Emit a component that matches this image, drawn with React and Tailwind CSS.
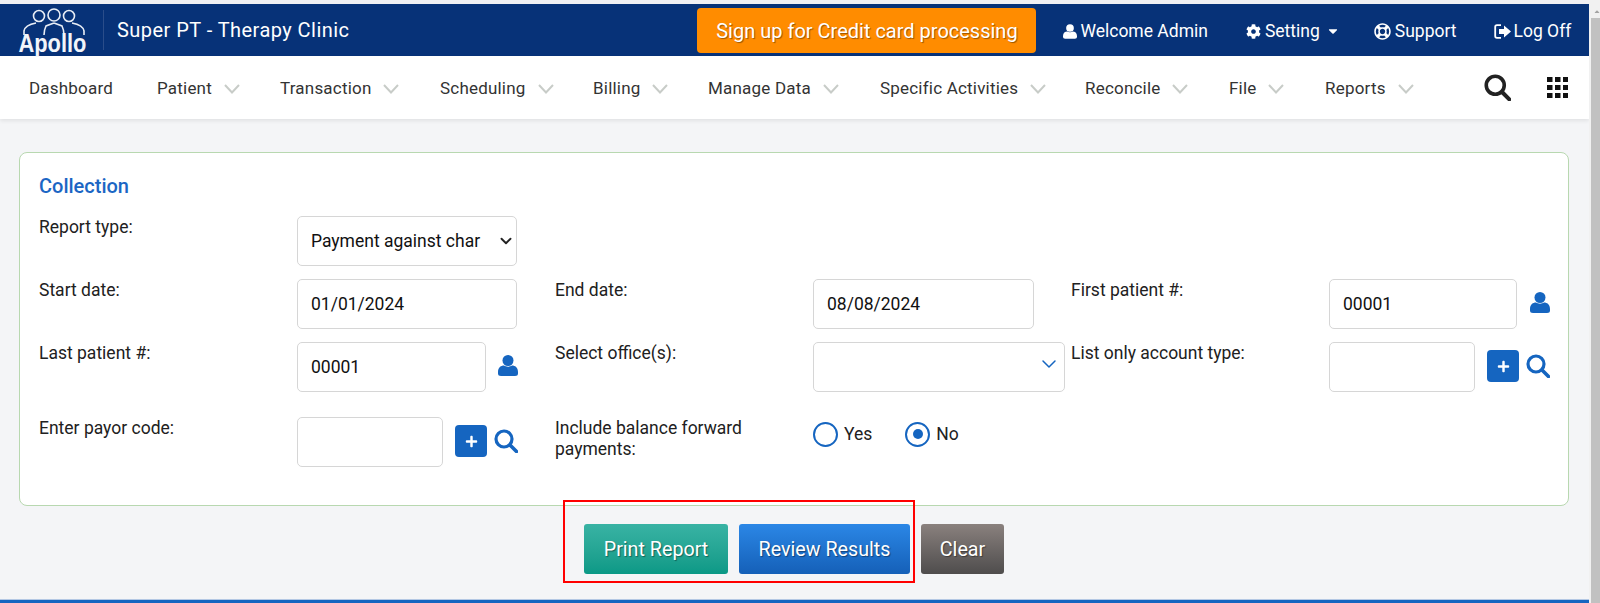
import React from 'react';
import { FaCog, FaRegLifeRing, FaCaretDown, FaPlus } from 'react-icons/fa';
import { ChevronDown } from 'lucide-react';

const menu = [
  { name: 'Dashboard', w: 'w-[128px]' },
  { name: 'Patient', w: 'w-[123px]', arrow: true },
  { name: 'Transaction', w: 'w-[160px]', arrow: true },
  { name: 'Scheduling', w: 'w-[153px]', arrow: true },
  { name: 'Billing', w: 'w-[115px]', arrow: true },
  { name: 'Manage Data', w: 'w-[172px]', arrow: true },
  { name: 'Specific Activities', w: 'w-[205px]', arrow: true },
  { name: 'Reconcile', w: 'w-[144px]', arrow: true },
  { name: 'File', w: 'w-[96px]', arrow: true },
  { name: 'Reports', w: 'w-[110px]', arrow: true },
];

const inputCls = 'h-[50px] rounded-[5px] border border-[#d6d6d6] bg-white pl-[13px] text-[17.5px] text-[#111] outline-none';
const btnCls = 'h-[50px] rounded-[3px] bg-gradient-to-b pt-[2px] text-[19.7px] text-white [text-shadow:1px_1px_1px_rgba(0,0,0,0.4)]';
const headerItem = 'flex items-center pt-[2px] text-[17.5px]';

const Label = ({ children, className = 'w-[258px]' }) => (
  <div className={`${className} shrink-0 pt-[1px] text-[17.5px] leading-[21px] text-[#212121]`}>{children}</div>
);

const Person = ({ className }) => (
  <svg width="20" height="21" viewBox="0 0 20 21" fill="currentColor" className={className}>
    <circle cx="10" cy="5.5" r="5.5" />
    <path d="M0 17 C0 12.5 3 10.5 6 10.5 C8 12 12 12 14 10.5 C17 10.5 20 12.5 20 17 V18.5 Q20 21 17 21 H3 Q0 21 0 18.5 Z" />
  </svg>
);

const SearchIcon = ({ size, className }) => (
  <svg width={size} height={size} viewBox="0 0 24 24" fill="none" stroke="currentColor" className={className}>
    <circle cx="10" cy="10" r="8" strokeWidth="3.2" />
    <path d="M16 16 L22.5 22.5" strokeWidth="3.6" strokeLinecap="round" />
  </svg>
);

const GridIcon = () => (
  <svg width="21" height="21" viewBox="0 0 21 21" fill="#111" className="ml-[36px]">
    {[0, 8, 16].map((y) =>
      [0, 8, 16].map((x) => <rect key={`${x}-${y}`} x={x} y={y} width="5.5" height="5" />)
    )}
  </svg>
);

const LogOffIcon = () => (
  <svg width="17" height="15" viewBox="0 0 17 15" fill="none">
    <path d="M7 1.2 H3 Q1.2 1.2 1.2 3 V12 Q1.2 13.8 3 13.8 H7" stroke="#fff" strokeWidth="1.8" />
    <path d="M5 5 H10 V1.5 L17 7.5 L10 13.5 V10 H5 Z" fill="#fff" />
  </svg>
);

const PlusSearch = () => (
  <div className="ml-[12px] mt-[8px] flex h-[32px] items-center gap-[7px]">
    <div className="flex h-[32px] w-[32px] items-center justify-center rounded-[4px] bg-[#1565c0] text-white">
      <FaPlus size={13} />
    </div>
    <SearchIcon size={24} className="text-[#1565c0]" />
  </div>
);

const Radio = ({ label, checked }) => (
  <div className="flex items-center gap-[6px]">
    <span className="flex h-[25px] w-[25px] items-center justify-center rounded-full border-[2px] border-[#1565c0] bg-white">
      {checked && <span className="h-[10px] w-[10px] rounded-full bg-[#1565c0]" />}
    </span>
    <span className="text-[17.5px] text-[#212121]">{label}</span>
  </div>
);

const Logo = () => (
  <div className="flex w-[87px] flex-col items-center">
    <svg width="70" height="30" viewBox="0 0 70 30" fill="none" stroke="#e8edf5" strokeWidth="1.6" className="-mb-[5px]">
      <circle cx="21" cy="10" r="5.5" />
      <circle cx="36" cy="9" r="6" />
      <circle cx="51" cy="10" r="5.5" />
      <path d="M6 29 V25 Q7 19 18 17 M36 17 L28 20 Q26 24 26 29 M36 17 L44 20 Q46 24 46 29 M54 17 Q65 19 66 25 V29" />
    </svg>
    <span className="font-['Liberation_Sans',sans-serif] text-[26px] font-bold leading-[24px] text-[#f2f5fa] scale-x-[0.84]">Apollo</span>
  </div>
);

export default function App() {
  return (
    <div className="flex h-[603px] w-full overflow-hidden bg-[#f4f5f7] font-['Roboto',sans-serif]">
      <div className="flex min-w-0 flex-1 flex-col">
        <div className="h-[4px] shrink-0 bg-[#f0f0f4]" />
        <header className="flex h-[52px] shrink-0 items-center bg-[#073278] pl-[9px] text-white">
          <Logo />
          <div className="ml-[7px] h-[40px] w-px bg-[#2a4d8a]" />
          <div className="ml-[13px] text-[20px] tracking-[0.45px]">Super PT - Therapy Clinic</div>
          <button className="ml-[348px] h-[45px] w-[339px] rounded-[4px] bg-[#ff8c00] pt-[1px] text-[20px] text-white [text-shadow:1px_1px_1px_rgba(0,0,0,0.4)]">
            Sign up for Credit card processing
          </button>
          <div className={`${headerItem} ml-[27px] gap-[3px]`}><Person className="h-[15px] w-[14px]" />Welcome Admin</div>
          <div className={`${headerItem} ml-[38px] gap-[4px]`}><FaCog size={15} />Setting<FaCaretDown size={14} className="ml-[2px]" /></div>
          <div className={`${headerItem} ml-[34px] gap-[4px]`}><FaRegLifeRing size={17} />Support</div>
          <div className={`${headerItem} ml-[37px] gap-[3px]`}><LogOffIcon />Log Off</div>
        </header>
        <nav className="flex h-[63px] shrink-0 items-center bg-white pl-[29px] shadow-[0_2px_4px_rgba(0,0,0,0.08)]">
          {menu.map((m) => (
            <div key={m.name} className={`flex items-center gap-[12px] pt-[2px] text-[17px] tracking-[0.2px] text-[#333] ${m.w}`}>
              {m.name}
              {m.arrow && (
                <svg width="16" height="10" viewBox="0 0 16 10" fill="none" stroke="#c8ccc8" strokeWidth="2">
                  <path d="M1 1 L8 8.5 L15 1" />
                </svg>
              )}
            </div>
          ))}
          <SearchIcon size={27} className="ml-[49px] text-[#222]" />
          <GridIcon />
        </nav>
        <main className="flex-1 pl-[19px] pr-[20px] pt-[33px]">
          <section className="h-[354px] rounded-[8px] border border-[#b8d8b0] bg-white pl-[19px] pt-[21px]">
            <h2 className="text-[20px] font-medium leading-[24px] text-[#1b66c4]">Collection</h2>
            <div className="mt-[18px] flex h-[50px]">
              <Label>Report type:</Label>
              <div className="relative">
                <div className={`${inputCls} flex w-[220px] items-center`}>Payment against char</div>
                <ChevronDown size={18} strokeWidth={2.5} className="absolute right-[2px] top-[16px] text-[#222]" />
              </div>
            </div>
            <div className="mt-[13px] flex h-[50px]">
              <div className="flex w-[516px]">
                <Label>Start date:</Label>
                <input readOnly value="01/01/2024" className={`${inputCls} w-[220px]`} />
              </div>
              <div className="flex w-[516px]">
                <Label>End date:</Label>
                <input readOnly value="08/08/2024" className={`${inputCls} w-[221px]`} />
              </div>
              <div className="flex">
                <Label>First patient #:</Label>
                <input readOnly value="00001" className={`${inputCls} w-[188px]`} />
                <Person className="ml-[13px] mt-[13px] text-[#1565c0]" />
              </div>
            </div>
            <div className="mt-[13px] flex h-[50px]">
              <div className="flex w-[516px]">
                <Label>Last patient #:</Label>
                <input readOnly value="00001" className={`${inputCls} w-[189px]`} />
                <Person className="ml-[12px] mt-[13px] text-[#1565c0]" />
              </div>
              <div className="flex w-[516px]">
                <Label>Select office(s):</Label>
                <div className="relative">
                  <div className={`${inputCls} w-[252px]`} />
                  <ChevronDown size={24} strokeWidth={1.5} className="absolute right-[4px] top-[10px] text-[#1565c0]" />
                </div>
              </div>
              <div className="flex">
                <Label>List only account type:</Label>
                <input readOnly className={`${inputCls} w-[146px]`} />
                <PlusSearch />
              </div>
            </div>
            <div className="mt-[25px] flex h-[50px]">
              <div className="flex w-[516px]">
                <Label>Enter payor code:</Label>
                <input readOnly className={`${inputCls} w-[146px]`} />
                <PlusSearch />
              </div>
              <div className="flex">
                <Label className="w-[258px] pr-[40px]">Include balance forward payments:</Label>
                <div className="flex h-[25px] gap-[33px] pt-[9px]">
                  <Radio label="Yes" />
                  <Radio label="No" checked />
                </div>
              </div>
            </div>
          </section>
          <div className="mt-[18px] flex pl-[565px]">
            <div className="relative flex gap-[11px]">
              <div className="absolute -bottom-[9px] -left-[21px] -right-[5px] -top-[24px] border-2 border-[#ff0000]" />
              <button className={`${btnCls} w-[144px] from-[#38b3a4] to-[#0a9986]`}>Print Report</button>
              <button className={`${btnCls} w-[171px] from-[#2b87e6] to-[#1560b8]`}>Review Results</button>
            </div>
            <button className={`${btnCls} ml-[11px] w-[83px] from-[#8a817e] to-[#4f4d4d]`}>Clear</button>
          </div>
        </main>
        <div className="h-[4px] shrink-0 border-t border-[#b4c8e4] bg-[#1565c0]" />
      </div>
      <div className="flex w-[11px] shrink-0 flex-col bg-[#f1f1f1] pl-[2px]">
        <div className="h-[18px] pl-[2px] pt-[8px] text-[#a3a3a3]">
          <FaCaretDown size={8} className="rotate-180" />
        </div>
        <div className="flex-1 bg-[#c1c1c1]" />
      </div>
    </div>
  );
}
